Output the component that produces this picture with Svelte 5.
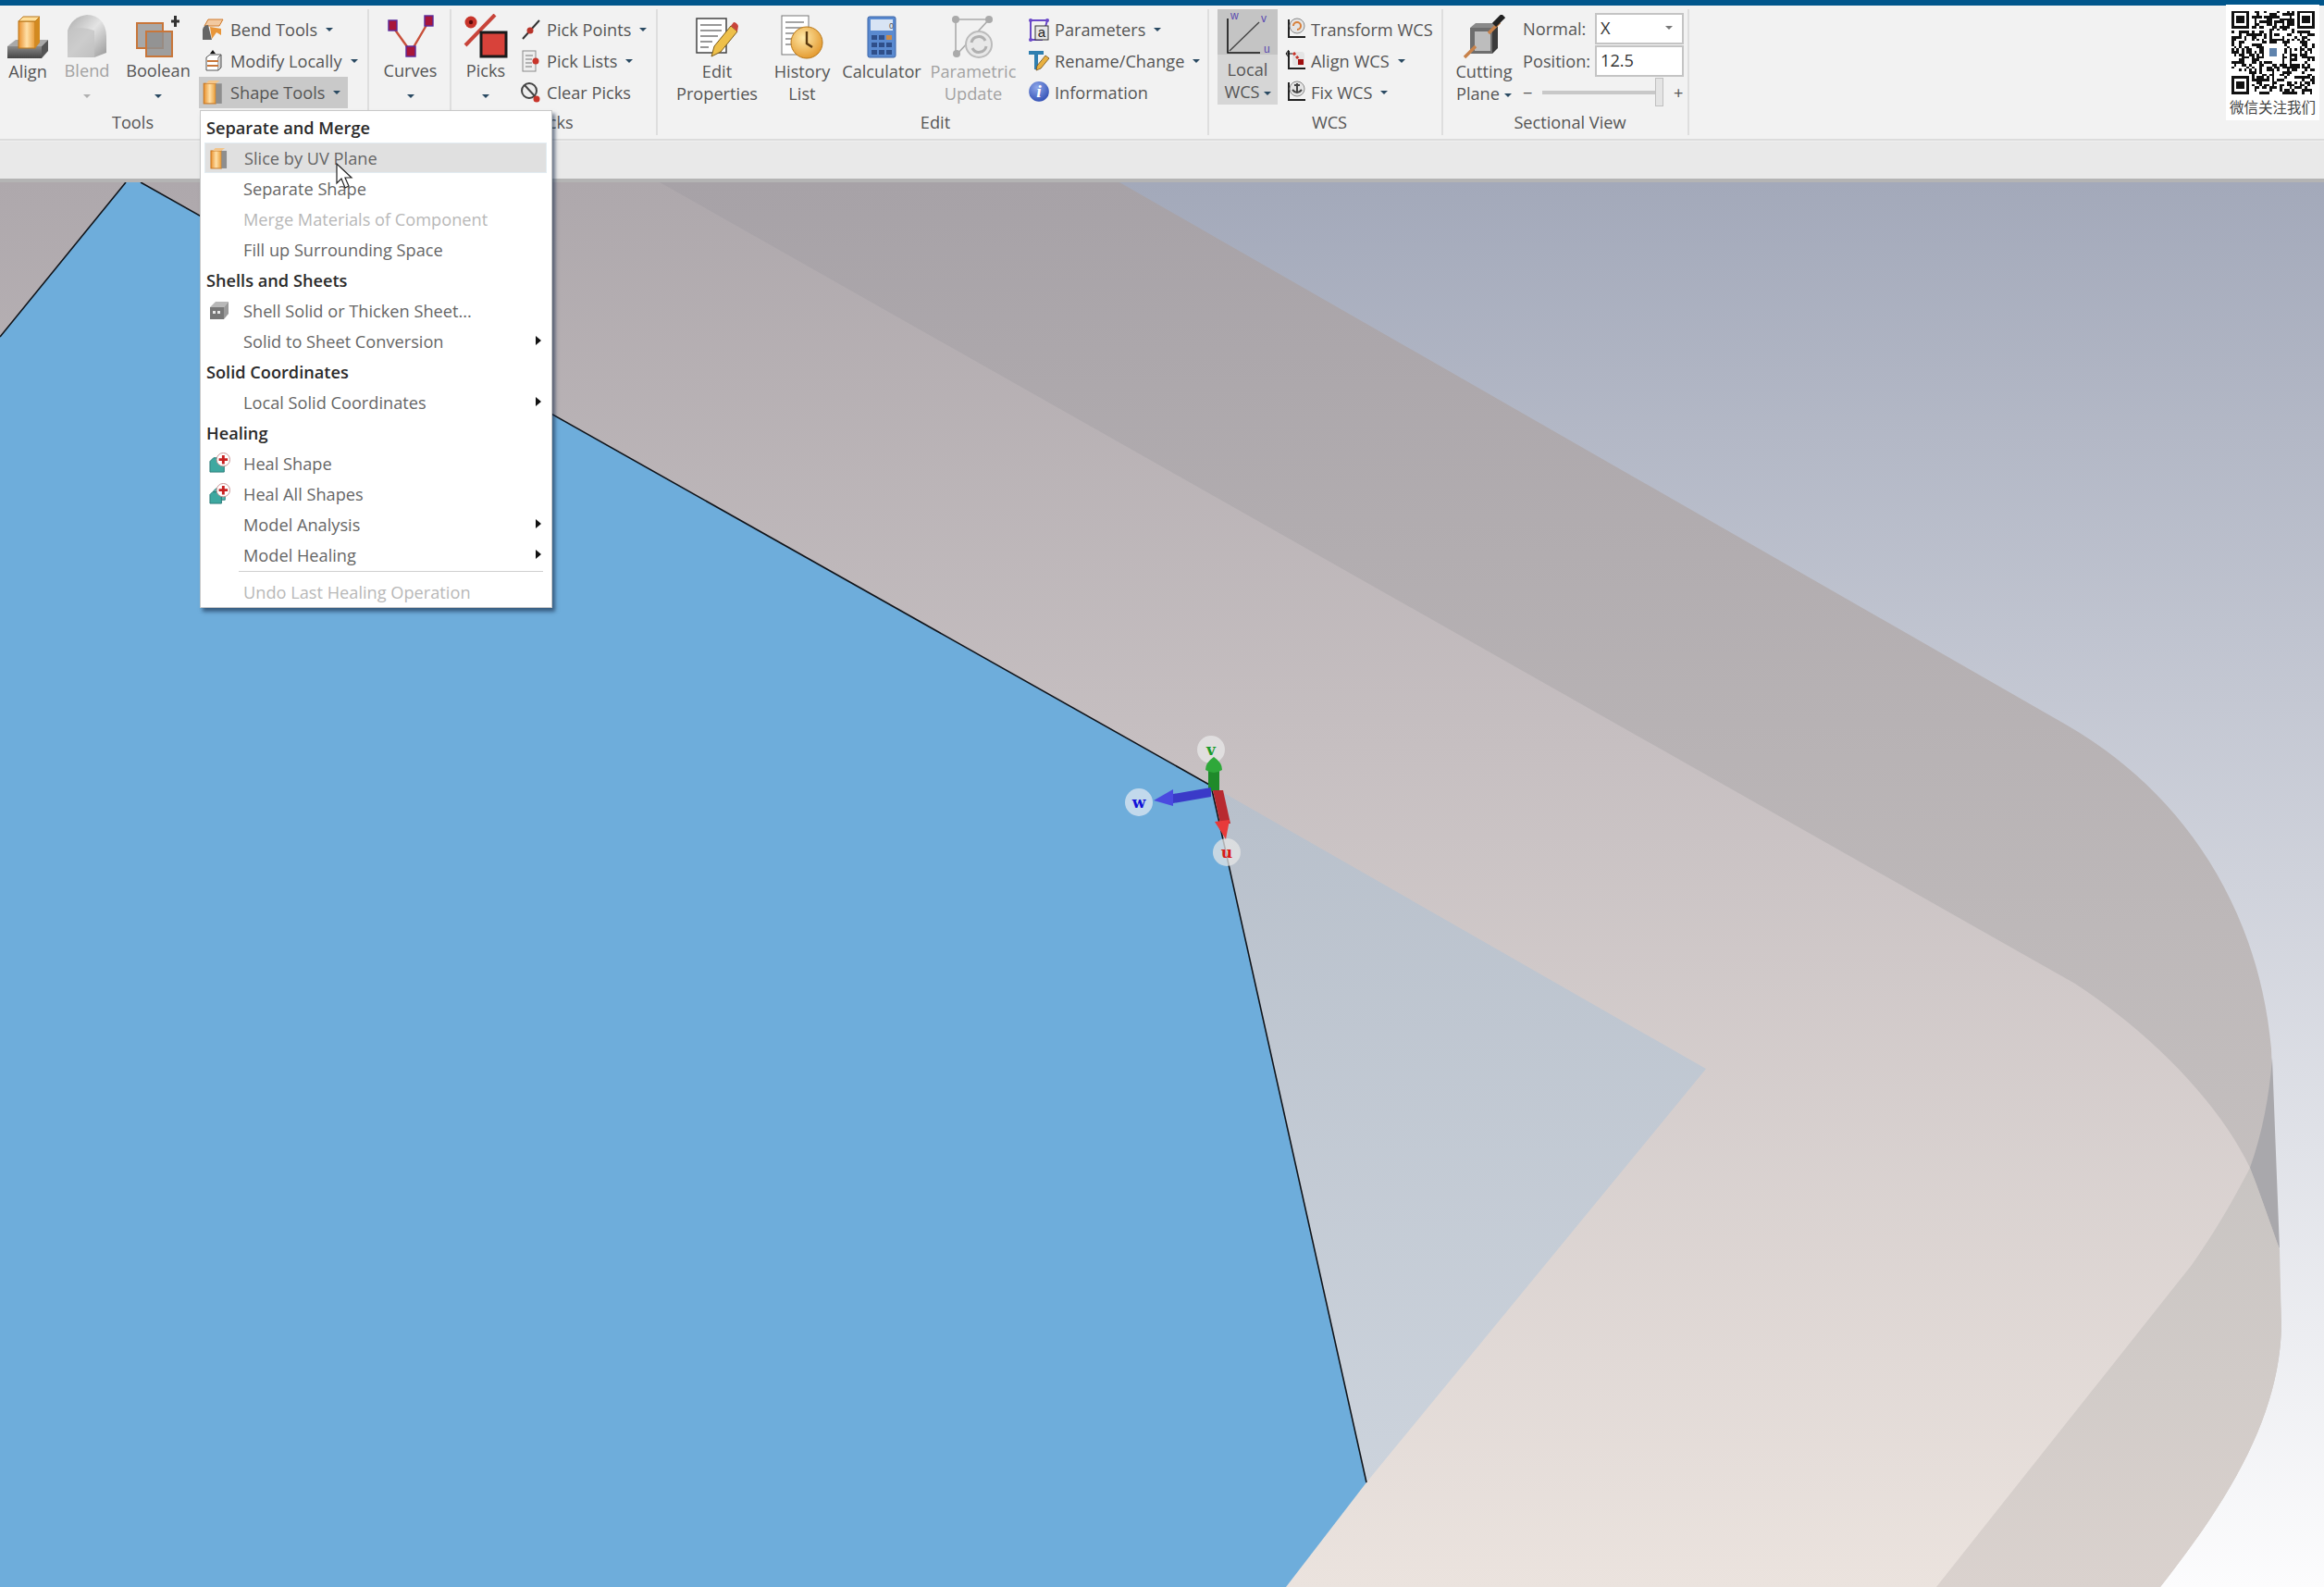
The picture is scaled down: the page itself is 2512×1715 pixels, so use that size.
<script lang="ts">
    // fake QR modules, stable between runs
    const QR_SIZE = 33;

    function inFinder(x: number, y: number, ox: number, oy: number): boolean | null {
        const dx = x - ox;
        const dy = y - oy;
        if (dx < -1 || dy < -1 || dx > 7 || dy > 7) return null;
        if (dx < 0 || dy < 0 || dx > 6 || dy > 6) return false;
        if (dx === 0 || dy === 0 || dx === 6 || dy === 6) return true;
        if (dx === 1 || dy === 1 || dx === 5 || dy === 5) return false;
        return true;
    }

    function buildQrPath(): string {
        let seed = 20517;
        let d = '';
        for (let y = 0; y < QR_SIZE; y++) {
            for (let x = 0; x < QR_SIZE; x++) {
                seed = (seed * 1103515245 + 12345) & 0x7fffffff;
                let on = ((seed >> 16) & 7) > 3;
                const finder =
                    inFinder(x, y, 0, 0) ?? inFinder(x, y, QR_SIZE - 7, 0) ?? inFinder(x, y, 0, QR_SIZE - 7);
                if (finder !== null) on = finder;
                if (on) d += `M${x} ${y}h1v1h-1z`;
            }
        }
        return d;
    }

    const qrPath = buildQrPath();
</script>

{#snippet caret(muted = false)}
    <span class="caret" class:caret--muted={muted}></span>
{/snippet}

{#snippet axes()}
    <path d="M5 2V21H23" fill="none" stroke="#222" stroke-width="2" />
{/snippet}

{#snippet small(label: string, hasCaret: boolean, icon: any, active = false)}
    <div class="small" class:small--active={active}>
        <span class="small-icon">{@render icon()}</span>
        <span>{label}</span>
        {#if hasCaret}{@render caret()}{/if}
    </div>
{/snippet}

{#snippet bendIcon()}
    <svg viewBox="0 0 24 24"><path d="M7 1H23L19 8H3Z" fill="#f2c9a0" stroke="#d07a2a" /><path d="M1 23V12Q2 7 7 7L11 23Z" fill="#666" /><path d="M9 9L21 11V18L16 15L11 22Z" fill="#e8963a" /></svg>
{/snippet}
{#snippet modifyIcon()}
    <svg viewBox="0 0 24 24"><path d="M12 0L15 4H9Z" fill="#111" /><path d="M5 8L9 5H21L18 8V22H5Z" fill="#fff" stroke="#555" /><path d="M6 12H18M6 17H18" stroke="#c8763a" stroke-width="2" /><path d="M18 8L21 5V19L18 22" fill="#ccc" stroke="#555" /></svg>
{/snippet}
{#snippet sliceIcon()}
    <svg viewBox="0 0 20 24"><rect x="1" y="3" width="12" height="20" fill="url(#orangeV)" stroke="#c8761f" /><path d="M3 3L6 0H17L13 3Z" fill="#f3c58a" /><rect x="13" y="3" width="6" height="20" fill="#8e8e8e" /></svg>
{/snippet}
{#snippet pickPointIcon()}
    <svg viewBox="0 0 24 24"><path d="M3 22L21 2" stroke="#333" stroke-width="2" /><circle cx="11" cy="13" r="3.5" fill="#b8342a" /></svg>
{/snippet}
{#snippet pickListIcon()}
    <svg viewBox="0 0 24 24"><rect x="3" y="1" width="14" height="22" fill="#eee" stroke="#8a8a8a" /><path d="M6 6H14M6 10H13M6 14H13M6 18H13" stroke="#777" /><circle cx="17" cy="12" r="3.5" fill="#c8342a" /></svg>
{/snippet}
{#snippet clearPickIcon()}
    <svg viewBox="0 0 24 24"><circle cx="10" cy="10" r="8" fill="#eee" stroke="#444" stroke-width="2" /><path d="M5 4L18 18" stroke="#444" stroke-width="2" /><circle cx="18" cy="19" r="3.5" fill="#c8342a" /></svg>
{/snippet}
{#snippet paramIcon()}
    <svg viewBox="0 0 24 26"><path d="M3 3H21L15 24H3Z" fill="none" stroke="#6a48c8" stroke-width="2" /><circle cx="3" cy="3" r="2" fill="#6a48c8" /><circle cx="21" cy="3" r="2" fill="#6a48c8" /><circle cx="3" cy="24" r="2" fill="#6a48c8" /><rect x="8" y="9" width="14" height="15" fill="#e6e6e6" stroke="#333" /><text x="15" y="21" class="glyph">a</text></svg>
{/snippet}
{#snippet renameIcon()}
    <svg viewBox="0 0 24 26"><path d="M1 2H17V6H11V22H7V6H1Z" fill="#2f7fb0" /><path d="M9 23L10 18L19 7L23 10L14 21Z" fill="#e8b040" stroke="#6a4a1a" stroke-width=".8" /></svg>
{/snippet}
{#snippet infoIcon()}
    <svg viewBox="0 0 22 24"><circle cx="11" cy="11" r="10" fill="url(#blueBall)" /><text x="11" y="17" class="info-i">i</text></svg>
{/snippet}
{#snippet transformIcon()}
    <svg viewBox="0 0 24 26">{@render axes()}<circle cx="14" cy="9" r="8" fill="#e4e4e4" stroke="#888" /><path d="M10 9A4 4 0 1 1 14 13" fill="none" stroke="#d8803a" stroke-width="2" /></svg>
{/snippet}
{#snippet alignIcon()}
    <svg viewBox="0 0 24 26">{@render axes()}<path d="M2 5H9M5 1L2 5L5 9" fill="none" stroke="#111" /><rect x="9" y="3" width="13" height="15" rx="3" fill="#e4e4e4" /><path d="M10 4L20 16" stroke="#c8342a" stroke-width="3" stroke-dasharray="3 2" /><rect x="15" y="11" width="6" height="6" fill="#a01010" /></svg>
{/snippet}
{#snippet fixIcon()}
    <svg viewBox="0 0 24 26">{@render axes()}<circle cx="14" cy="9" r="8" fill="#e4e4e4" stroke="#888" /><path d="M14 3V13M9 10Q14 16 19 10M11 5H17" fill="none" stroke="#444" stroke-width="2" /></svg>
{/snippet}

<div class="app">
    <svg class="defs" width="0" height="0" aria-hidden="true">
        <defs>
            <linearGradient id="orangeV" x1="0" y1="0" x2="1" y2="0">
                <stop offset="0" stop-color="#e88f2c" /><stop offset=".5" stop-color="#ffe0a8" /><stop offset="1" stop-color="#e89a34" />
            </linearGradient>
            <linearGradient id="steel" x1="0" y1="0" x2="0" y2="1">
                <stop offset="0" stop-color="#8a8a8a" /><stop offset="1" stop-color="#444" />
            </linearGradient>
            <linearGradient id="blend" x1="0" y1="0" x2="1" y2="1">
                <stop offset="0" stop-color="#aaa" /><stop offset=".5" stop-color="#e4e4e4" /><stop offset="1" stop-color="#999" />
            </linearGradient>
            <radialGradient id="blueBall" cx=".4" cy=".3" r=".8">
                <stop offset="0" stop-color="#8fa8ea" /><stop offset="1" stop-color="#2a48b0" />
            </radialGradient>
            <radialGradient id="clock" cx=".4" cy=".35" r=".75">
                <stop offset="0" stop-color="#ffe9a8" /><stop offset="1" stop-color="#e09020" />
            </radialGradient>

            <linearGradient id="bgFill" gradientUnits="userSpaceOnUse" x1="0" y1="197" x2="0" y2="1715">
                <stop offset="0" stop-color="#a3a9ba" /><stop offset="1" stop-color="#fcfcfd" />
            </linearGradient>
            <linearGradient id="backFill" gradientUnits="userSpaceOnUse" x1="0" y1="197" x2="0" y2="1715">
                <stop offset="0" stop-color="#a7a2a7" /><stop offset=".65" stop-color="#c2bdbd" /><stop offset="1" stop-color="#d4ccc8" />
            </linearGradient>
            <linearGradient id="wallFill" gradientUnits="userSpaceOnUse" x1="0" y1="1260" x2="0" y2="1715">
                <stop offset="0" stop-color="#c8c4c2" /><stop offset="1" stop-color="#dad2ce" />
            </linearGradient>
            <linearGradient id="faceFill" gradientUnits="userSpaceOnUse" x1="0" y1="197" x2="0" y2="1715">
                <stop offset="0" stop-color="#aea8ac" /><stop offset=".4" stop-color="#c6bfc1" /><stop offset="1" stop-color="#ebe3de" />
            </linearGradient>
            <linearGradient id="holeFill" gradientUnits="userSpaceOnUse" x1="0" y1="850" x2="0" y2="1600">
                <stop offset="0" stop-color="#b8c0cb" /><stop offset="1" stop-color="#ccd3dc" />
            </linearGradient>
        </defs>
    </svg>

    <header class="ribbon">
        <section class="group group--tools">
            <div class="group-body">
                <div class="big w-align">
                    <div class="big-icon">
                        <svg viewBox="0 0 46 46" width="46" height="46">
                            <path d="M1 33L10 26H45L38 33Z" fill="#a9a9a9" /><rect x="1" y="33" width="37" height="13" fill="url(#steel)" /><path d="M38 33L45 26V38L38 46Z" fill="#555" />
                            <rect x="13" y="6" width="18" height="29" fill="url(#orangeV)" stroke="#b8761a" /><path d="M13 6L18 1H36L31 6Z" fill="#ffdf9a" stroke="#b8761a" /><path d="M31 6L36 1V29L31 35Z" fill="#d28a20" />
                        </svg>
                    </div>
                    <span>Align</span>
                </div>
                <div class="big big--off w-blend">
                    <div class="big-icon">
                        <svg viewBox="0 0 44 48" width="44" height="48"><path d="M1 47V18Q6 3 22 1Q42 2 43 24V42L30 47Z" fill="url(#blend)" /><path d="M1 18Q14 12 30 18V47H1Z" fill="#c4c4c4" fill-opacity=".75" /></svg>
                    </div>
                    <span>Blend</span>
                    <span class="caret-line">{@render caret(true)}</span>
                </div>
                <div class="big w-bool">
                    <div class="big-icon">
                        <svg viewBox="0 0 48 46" width="48" height="46">
                            <rect x="1" y="9" width="28" height="27" fill="#a8a8a8" stroke="#c8763a" stroke-width="2" /><rect x="11" y="18" width="28" height="27" fill="#8f8f8f" fill-opacity=".85" stroke="#c8763a" stroke-width="2" />
                            <path d="M38 7H47M42.5 1V13" stroke="#333" stroke-width="3" />
                        </svg>
                    </div>
                    <span>Boolean</span>
                    <span class="caret-line">{@render caret()}</span>
                </div>
                <div class="stack stack--tools">
                    {@render small('Bend Tools', true, bendIcon)}
                    {@render small('Modify Locally', true, modifyIcon)}
                    {@render small('Shape Tools', true, sliceIcon, true)}
                </div>
            </div>
            <div class="group-label group-label--tools">Tools</div>
        </section>

        <section class="group group--curves">
            <div class="group-body">
                <div class="big w-curves">
                    <div class="big-icon">
                        <svg viewBox="0 0 52 46" width="52" height="46">
                            <path d="M6 12L26 40L46 6" fill="none" stroke="#c8503a" stroke-width="2.4" />
                            <rect x="2" y="6" width="9" height="11" fill="#a8163a" stroke="#5a2a9a" stroke-width="1.4" />
                            <rect x="41" y="1" width="9" height="11" fill="#a8163a" stroke="#5a2a9a" stroke-width="1.4" />
                            <rect x="21" y="34" width="10" height="11" fill="#a8163a" stroke="#5a2a9a" stroke-width="1.4" />
                        </svg>
                    </div>
                    <span>Curves</span>
                    <span class="caret-line">{@render caret()}</span>
                </div>
            </div>
            <div class="group-label">&nbsp;</div>
        </section>

        <section class="group group--picks">
            <div class="group-body">
                <div class="big w-picks">
                    <div class="big-icon">
                        <svg viewBox="0 0 48 48" width="48" height="48">
                            <path d="M2 34L34 1" stroke="#c8443a" stroke-width="4" />
                            <circle cx="8" cy="9" r="6.5" fill="#c8342a" /><circle cx="8" cy="9" r="2.2" fill="#5a0a0a" />
                            <rect x="19" y="20" width="27" height="26" fill="#d8423a" stroke="#1a1a1a" stroke-width="3" />
                        </svg>
                    </div>
                    <span>Picks</span>
                    <span class="caret-line">{@render caret()}</span>
                </div>
                <div class="stack stack--tight">
                    {@render small('Pick Points', true, pickPointIcon)}
                    {@render small('Pick Lists', true, pickListIcon)}
                    {@render small('Clear Picks', false, clearPickIcon)}
                </div>
            </div>
            <div class="group-label">Picks</div>
        </section>

        <section class="group group--edit">
            <div class="group-body">
                <div class="big w-edit">
                    <div class="big-icon">
                        <svg viewBox="0 0 46 46" width="46" height="46">
                            <rect x="1" y="3" width="32" height="37" fill="#fff" stroke="#444" stroke-width="1.5" />
                            <path d="M5 10H28M5 16H28M5 22H24M5 28H18M5 34H14" stroke="#777" stroke-width="1.5" />
                            <path d="M17 44L20 33L38 11L45 17L27 39Z" fill="#eec04a" stroke="#7a5a1a" /><path d="M38 11L41 7Q44 7 46 11L45 17Z" fill="#c8443a" />
                        </svg>
                    </div>
                    <span>Edit<br />Properties</span>
                </div>
                <div class="big w-history">
                    <div class="big-icon">
                        <svg viewBox="0 0 46 48" width="46" height="48">
                            <rect x="1" y="1" width="29" height="42" fill="#fff" stroke="#777" />
                            <path d="M5 8H25M5 14H25M5 20H18M5 26H14M5 32H14" stroke="#888" stroke-width="1.4" />
                            <circle cx="28" cy="30" r="17" fill="url(#clock)" stroke="#b8781a" />
                            <path d="M28 18V31L34 35" fill="none" stroke="#5a3a10" stroke-width="2.4" />
                        </svg>
                    </div>
                    <span>History<br />List</span>
                </div>
                <div class="big w-calc">
                    <div class="big-icon">
                        <svg viewBox="0 0 32 46" width="32" height="46">
                            <rect x="1" y="1" width="30" height="44" rx="2" fill="#5a8ad0" stroke="#3a64a8" />
                            <rect x="4" y="4" width="24" height="12" fill="#d8e4f4" /><text x="24" y="14" class="calc-zero">0</text>
                            <path d="M5 21h6v5h-6zM13 21h6v5h-6zM5 29h6v5h-6zM13 29h6v5h-6zM21 29h6v5h-6zM5 37h6v5h-6zM13 37h6v5h-6zM21 37h6v5h-6z" fill="#2f4f8a" /><rect x="21" y="21" width="6" height="5" fill="#c88a4a" />
                        </svg>
                    </div>
                    <span>Calculator</span>
                </div>
                <div class="big big--off w-param">
                    <div class="big-icon">
                        <svg viewBox="0 0 48 48" width="48" height="48">
                            <path d="M5 5H41L7 42" fill="none" stroke="#aaa" stroke-width="1.6" /><path d="M5 5V42" stroke="#aaa" stroke-width="1.6" />
                            <circle cx="5" cy="5" r="4" fill="#aaa" /><circle cx="41" cy="5" r="4" fill="#aaa" /><circle cx="6" cy="42" r="4" fill="#aaa" />
                            <circle cx="30" cy="32" r="14" fill="#e8e8e8" stroke="#bbb" stroke-width="2" />
                            <path d="M22 30A8 8 0 0 1 37 28M38 34A8 8 0 0 1 23 36" fill="none" stroke="#b0b0b0" stroke-width="3" />
                        </svg>
                    </div>
                    <span>Parametric<br />Update</span>
                </div>
                <div class="stack stack--tight">
                    {@render small('Parameters', true, paramIcon)}
                    {@render small('Rename/Change', true, renameIcon)}
                    {@render small('Information', false, infoIcon)}
                </div>
            </div>
            <div class="group-label group-label--edit">Edit</div>
        </section>

        <section class="group group--wcs">
            <div class="group-body">
                <div class="wcs-btn">
                    <div class="wcs-btn-icon">
                        <svg viewBox="0 0 65 49" width="65" height="49">
                            <path d="M11 10V47H46" fill="none" stroke="#111" stroke-width="1.6" /><path d="M13 45L45 14" stroke="#444" stroke-width="1.4" />
                            <text x="14" y="11" class="axis-tag">w</text><text x="47" y="14" class="axis-tag">v</text><text x="50" y="47" class="axis-tag">u</text>
                        </svg>
                    </div>
                    <span class="wcs-btn-text">Local<br />WCS{@render caret()}</span>
                </div>
                <div class="stack stack--wcs">
                    {@render small('Transform WCS', false, transformIcon)}
                    {@render small('Align WCS', true, alignIcon)}
                    {@render small('Fix WCS', true, fixIcon)}
                </div>
            </div>
            <div class="group-label">WCS</div>
        </section>

        <section class="group group--section">
            <div class="group-body">
                <div class="big w-cut">
                    <div class="big-icon">
                        <svg viewBox="0 0 46 48" width="46" height="48">
                            <path d="M8 14H32V42H8Z" fill="#6e6e6e" /><path d="M8 14L14 9H38L32 14Z" fill="#8a8a8a" /><path d="M32 14L38 9V36L32 42Z" fill="#3a3a3a" />
                            <rect x="13" y="18" width="17" height="21" fill="#bdbdbd" />
                            <path d="M2 46L14 34M28 20L40 8" stroke="#c8824a" stroke-width="3.4" /><path d="M34 11L44 1" stroke="#222" stroke-width="6" />
                        </svg>
                    </div>
                    <span>Cutting<br />Plane{@render caret()}</span>
                </div>
                <div class="section-form">
                    <div class="form-row">
                        <span class="form-label">Normal:</span>
                        <div class="field field--select">X<span class="caret caret--field"></span></div>
                    </div>
                    <div class="form-row">
                        <span class="form-label">Position:</span>
                        <div class="field">12.5</div>
                    </div>
                    <div class="slider-row">
                        <span class="slider-sign">−</span>
                        <div class="slider-track"><span class="slider-thumb"></span></div>
                        <span class="slider-sign">+</span>
                    </div>
                </div>
            </div>
            <div class="group-label">Sectional View</div>
        </section>

        <aside class="qr">
            <svg class="qr-code" viewBox="0 0 {QR_SIZE} {QR_SIZE}" shape-rendering="crispEdges">
                <path d={qrPath} fill="#111" />
                <rect x="13" y="13" width="7" height="7" fill="#fff" />
                <rect x="15" y="15" width="3" height="3" fill="#5f83ad" />
            </svg>
            <span class="qr-text">微信关注我们</span>
        </aside>
    </header>

    <div class="band"></div>

    <main class="scene">
        <svg class="scene-svg" viewBox="0 197 2512 1518" preserveAspectRatio="none">
            <rect x="0" y="197" width="2512" height="1518" fill="url(#bgFill)" />
            <path d="M1210 197L2233 783C2350 850 2440 970 2455 1133L2466 1433C2464 1530 2410 1620 2335 1715H0V197Z" fill="url(#backFill)" />
            <path d="M2456 1143C2453 1185 2445 1225 2432 1262C2443 1290 2455 1325 2464 1350Z" fill="#a9a8ac" />
            <path d="M2093 1715L2369 1367C2395 1330 2415 1295 2432 1262C2443 1290 2455 1325 2464 1350L2466 1433C2464 1530 2410 1620 2335 1715Z" fill="url(#wallFill)" />
            <path d="M713 197L2243 1063C2330 1120 2400 1195 2432 1262C2415 1295 2395 1330 2369 1367L2093 1715H0V197Z" fill="url(#faceFill)" />
            <path d="M1309 849L1844 1155L1477 1602Z" fill="url(#holeFill)" />
            <path d="M0 364L136 197H152L1309 849L1477 1602L1390 1715H0Z" fill="#6eaddb" />
            <path d="M0 364L136 197M152 197L1309 849L1477 1602" fill="none" stroke="#10141a" stroke-width="1.6" />

            <!-- wcs triad -->
            <circle cx="1309" cy="810" r="15" fill="#e6e6e6" fill-opacity=".8" />
            <circle cx="1231" cy="867" r="15" fill="#dfe8f2" fill-opacity=".75" />
            <circle cx="1326" cy="921" r="15" fill="#e6e6e6" fill-opacity=".75" />
            <path d="M1306 855V829H1318V855Z" fill="#1f8a2a" />
            <path d="M1303 832Q1303 824 1312 818Q1321 824 1321 832Q1312 838 1303 832Z" fill="#2fa83a" />
            <path d="M1309 851L1268 858V868L1309 861Z" fill="#3a3ac8" />
            <path d="M1247 865L1268 853V871Z" fill="#4a4ae0" />
            <path d="M1311 854H1322L1330 890H1319Z" fill="#b82a30" />
            <path d="M1313 888L1329 886L1325 907Z" fill="#e83a3a" />
            <text x="1309" y="816" class="tag" fill="#1a9a2a">v</text>
            <text x="1231" y="873" class="tag" fill="#1010d8">w</text>
            <text x="1326" y="927" class="tag" fill="#d81a1a">u</text>
        </svg>
    </main>

    <nav class="menu">
        <div class="menu-head">Separate and Merge</div>
        <div class="menu-item menu-item--hover">
            <span class="menu-icon"><svg viewBox="0 0 20 24" width="19" height="23"><rect x="1" y="3" width="12" height="20" fill="url(#orangeV)" stroke="#c8761f" /><path d="M3 3L6 0H17L13 3Z" fill="#f3c58a" /><rect x="13" y="3" width="6" height="20" fill="#8e8e8e" /></svg></span>
            Slice by UV Plane
        </div>
        <div class="menu-item">Separate Shape</div>
        <div class="menu-item menu-item--off">Merge Materials of Component</div>
        <div class="menu-item">Fill up Surrounding Space</div>
        <div class="menu-head">Shells and Sheets</div>
        <div class="menu-item">
            <span class="menu-icon"><svg viewBox="0 0 22 22" width="22" height="22"><path d="M1 8L7 2H21L16 8Z" fill="#b8b8b8" /><rect x="1" y="8" width="15" height="13" fill="#777" /><path d="M16 8L21 2V15L16 21Z" fill="#999" /><path d="M4 12h3v3h-3zM9 12h3v3h-3z" fill="#e8e8e8" /></svg></span>
            Shell Solid or Thicken Sheet...
        </div>
        <div class="menu-item menu-item--sub">Solid to Sheet Conversion</div>
        <div class="menu-head">Solid Coordinates</div>
        <div class="menu-item menu-item--sub">Local Solid Coordinates</div>
        <div class="menu-head">Healing</div>
        <div class="menu-item">
            <span class="menu-icon"><svg viewBox="0 0 24 24" width="23" height="23"><path d="M1 10L5 6H17V22H1Z" fill="#3ea8a0" stroke="#2a7a78" /><circle cx="16" cy="8" r="7.5" fill="#fff" stroke="#c89090" /><path d="M16 3V13M11 8H21" stroke="#c82020" stroke-width="3" /></svg></span>
            Heal Shape
        </div>
        <div class="menu-item">
            <span class="menu-icon"><svg viewBox="0 0 24 24" width="23" height="23"><path d="M1 13L4 10H14V23H1Z" fill="#3ea8a0" stroke="#2a7a78" /><path d="M5 9L8 6H18V19H14V10H5Z" fill="#55b8b0" stroke="#2a7a78" /><circle cx="16" cy="8" r="7.5" fill="#fff" stroke="#c89090" /><path d="M16 3V13M11 8H21" stroke="#c82020" stroke-width="3" /></svg></span>
            Heal All Shapes
        </div>
        <div class="menu-item menu-item--sub">Model Analysis</div>
        <div class="menu-item menu-item--sub">Model Healing</div>
        <div class="menu-sep"></div>
        <div class="menu-item menu-item--off">Undo Last Healing Operation</div>
    </nav>

    <svg class="cursor" viewBox="0 0 20 30" width="20" height="30">
        <path d="M1 1V22L6 17L10 27L14 25L10 16H17Z" fill="#fff" stroke="#222" stroke-width="1.2" />
    </svg>
</div>

<style>
    :global(body) {
        margin: 0;
    }

    .app {
        position: relative;
        display: flex;
        flex-direction: column;
        width: 2512px;
        height: 1715px;
        overflow: hidden;
        font-family: 'Open Sans', 'Noto Sans', sans-serif;
        font-size: 18.2px;
        line-height: 24px;
        color: #555;
    }

    .defs {
        position: absolute;
    }

    .ribbon {
        position: relative;
        display: flex;
        flex: none;
        height: 144px;
        background: #f2f2f2;
        border-top: 6px solid #00568c;
        border-bottom: 2px solid #dcdcdc;
        box-sizing: content-box;
    }

    .group {
        display: flex;
        flex-direction: column;
        flex: none;
        box-sizing: border-box;
        height: 136px;
        margin-top: 4px;
        border-right: 2px solid #dedede;
    }

    .group--tools { width: 399px; }
    .group--curves { width: 89px; }
    .group--picks { width: 223px; }
    .group--edit { width: 596px; padding-left: 18px; }
    .group--wcs { width: 253px; padding-left: 9px; }
    .group--section { width: 266px; padding-left: 10px; }

    .group-body {
        display: flex;
        height: 110px;
    }

    .group-label {
        text-align: center;
        line-height: 24px;
    }

    .group-label--tools {
        padding-right: 110px;
    }

    .group-label--edit {
        padding-right: 12px;
    }

    .big {
        display: flex;
        flex-direction: column;
        align-items: center;
        text-align: center;
        flex: none;
        padding-top: 4px;
    }

    .big--off {
        color: #a2a2a2;
    }

    .big-icon {
        display: flex;
        align-items: center;
        justify-content: center;
        height: 51px;
    }

    .big-icon svg {
        display: block;
    }

    .caret-line {
        display: flex;
        align-items: center;
        height: 32px;
    }

    .w-align { width: 60px; }
    .w-blend { width: 68px; }
    .w-bool { width: 86px; }
    .w-curves { width: 89px; }
    .w-picks { width: 74px; }
    .w-edit { width: 92px; }
    .w-history { width: 92px; }
    .w-calc { width: 80px; }
    .w-param { width: 118px; }
    .w-cut { width: 68px; }

    .stack {
        display: flex;
        flex-direction: column;
        padding-top: 5px;
        flex: none;
    }

    .stack--tools {
        margin-left: 1px;
    }

    .stack--tight {
        margin-left: -3px;
    }

    .stack--tight .small-icon {
        margin-right: 5px;
    }

    .stack--wcs {
        padding-left: 4px;
    }

    .stack--wcs .small-icon {
        margin-right: 5px;
    }

    .small {
        display: flex;
        align-items: center;
        height: 34px;
        padding: 0 6px 0 3px;
        white-space: nowrap;
    }

    .small--active {
        background: #c9c9c9;
        width: fit-content;
        padding-right: 8px;
    }

    .small-icon {
        display: flex;
        width: 24px;
        margin-right: 7px;
        flex: none;
    }

    .small-icon svg {
        display: block;
        width: 24px;
        height: 26px;
    }

    .caret {
        display: inline-block;
        width: 0;
        height: 0;
        margin-left: 9px;
        vertical-align: middle;
        border-left: 4px solid transparent;
        border-right: 4px solid transparent;
        border-top: 4px solid #2a4a62;
    }

    .caret--muted {
        border-top-color: #b0b0b0;
        margin-left: 0;
    }

    .caret-line .caret {
        margin-left: 0;
    }

    .wcs-btn {
        display: flex;
        flex-direction: column;
        align-items: center;
        width: 65px;
        height: 103px;
        background: #d6d6d6;
        flex: none;
    }

    .wcs-btn-icon {
        background: #c4c4c4;
        height: 49px;
        width: 100%;
    }

    .wcs-btn-icon svg {
        display: block;
    }

    .wcs-btn-text {
        text-align: center;
        margin-top: 4px;
        white-space: nowrap;
    }

    .wcs-btn-text .caret {
        margin-left: 4px;
    }

    .w-cut .caret {
        margin-left: 5px;
    }

    .section-form {
        display: flex;
        flex-direction: column;
        padding-left: 8px;
        padding-top: 4px;
    }

    .form-row {
        display: flex;
        align-items: center;
        margin-bottom: 1px;
    }

    .form-label {
        width: 78px;
    }

    .field {
        position: relative;
        box-sizing: border-box;
        width: 96px;
        height: 34px;
        padding: 2px 4px;
        background: #fff;
        border: 2px solid #c4c4c4;
        color: #333;
        margin-left: 0;
    }

    .caret--field {
        position: absolute;
        right: 10px;
        top: 12px;
        border-top-color: #777;
    }

    .slider-row {
        display: flex;
        align-items: center;
        gap: 11px;
        height: 32px;
    }

    .slider-sign {
        width: 10px;
        text-align: center;
    }

    .slider-track {
        position: relative;
        width: 131px;
        height: 4px;
        background: #c8c8c8;
    }

    .slider-thumb {
        position: absolute;
        right: 0;
        top: -14px;
        width: 7px;
        height: 29px;
        background: #e4e4e4;
        border: 1px solid #c0c0c0;
    }

    .qr {
        position: absolute;
        top: -1px;
        left: 2406px;
        display: flex;
        flex-direction: column;
        align-items: center;
        box-sizing: border-box;
        width: 101px;
        height: 125px;
        padding-top: 6px;
        background: #fff;
    }

    .qr-code {
        width: 90px;
        height: 91px;
    }

    .qr-text {
        font-family: 'Noto Sans CJK SC', sans-serif;
        font-size: 15.5px;
        line-height: 26px;
        color: #444;
        white-space: nowrap;
    }

    .band {
        flex: none;
        height: 40px;
        background: #e9e9e9;
        border-top: 1px solid #efefef;
        border-bottom: 4px solid #b4b4b4;
    }

    .scene {
        flex: 1;
        min-height: 0;
    }

    .scene-svg {
        display: block;
        width: 100%;
        height: 100%;
    }

    .tag {
        font-family: 'DejaVu Serif', serif;
        font-size: 17px;
        font-weight: 700;
        text-anchor: middle;
    }

    .glyph {
        font-family: 'Liberation Sans', sans-serif;
        font-size: 15px;
        text-anchor: middle;
        fill: #222;
    }

    .info-i {
        font-family: 'Liberation Serif', serif;
        font-style: italic;
        font-weight: 700;
        font-size: 18px;
        text-anchor: middle;
        fill: #fff;
    }

    .calc-zero {
        font-family: 'Liberation Sans', sans-serif;
        font-size: 9px;
        fill: #555;
    }

    .axis-tag {
        font-family: 'Liberation Sans', sans-serif;
        font-size: 12px;
        fill: #5a4ab0;
    }

    .menu {
        position: absolute;
        left: 216px;
        top: 119px;
        box-sizing: border-box;
        width: 381px;
        height: 538px;
        padding: 1px 5px 0 4px;
        background: #fff;
        border: 1px solid #c8c8c8;
        box-shadow: 3px 4px 4px rgba(20, 40, 70, 0.6);
    }

    .menu-head {
        display: flex;
        align-items: center;
        height: 33px;
        padding-left: 2px;
        font-weight: 600;
        color: #2a2a2a;
    }

    .menu-item {
        position: relative;
        display: flex;
        align-items: center;
        box-sizing: border-box;
        height: 33px;
        padding-left: 42px;
        color: #666;
    }

    .menu-item--hover {
        background: #e0e0e0;
        border: 1px solid #e2ecf2;
    }

    .menu-item--off {
        color: #b8b8b8;
    }

    .menu-item--sub::after {
        content: '';
        position: absolute;
        right: 6px;
        top: 11px;
        border-top: 5px solid transparent;
        border-bottom: 5px solid transparent;
        border-left: 6px solid #111;
    }

    .menu-icon {
        position: absolute;
        left: 5px;
        top: 5px;
        display: flex;
    }

    .menu-sep {
        height: 1px;
        margin: 1px 4px 5px 37px;
        background: #d0d0d0;
    }

    .cursor {
        position: absolute;
        left: 363px;
        top: 176px;
    }
</style>
